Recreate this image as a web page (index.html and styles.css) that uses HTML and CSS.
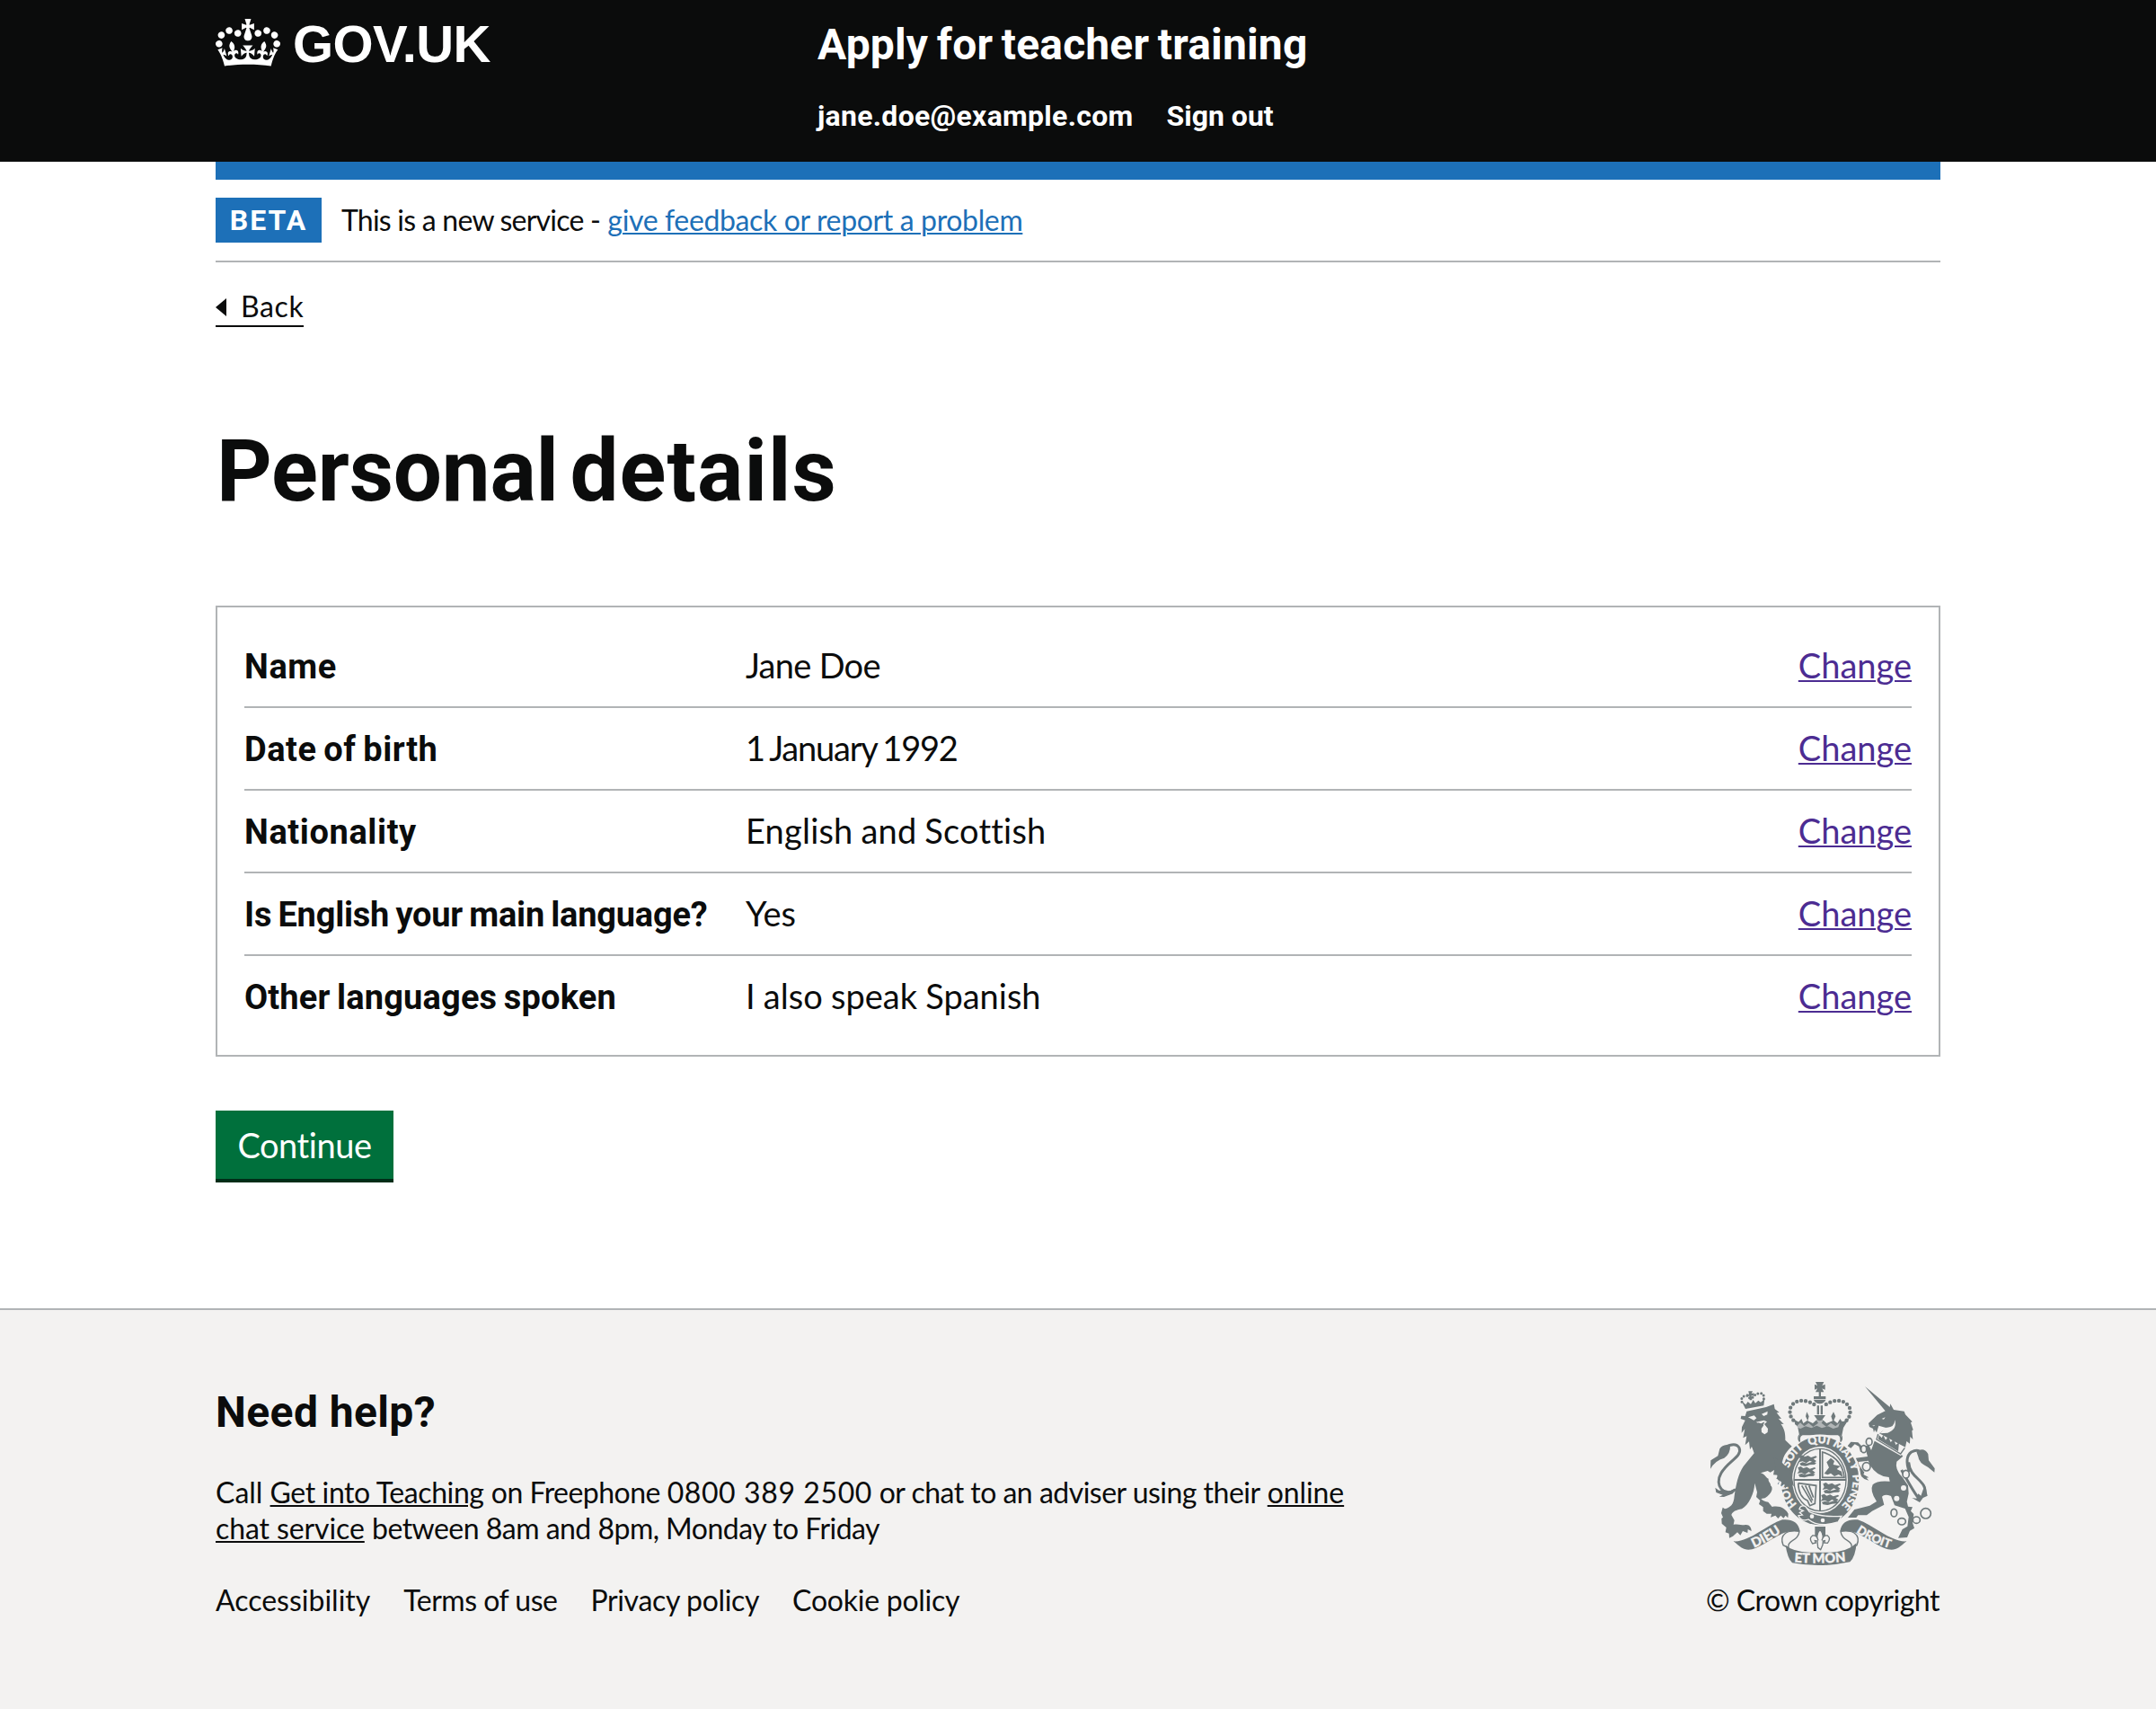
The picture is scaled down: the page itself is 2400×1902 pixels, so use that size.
FILE: index.html
```html
<!DOCTYPE html>
<html lang="en">
<head>
<meta charset="utf-8">
<title>Personal details - Apply for teacher training</title>
<link rel="stylesheet" href="styles.css">
</head>
<body>
<header class="header">
  <div class="container header-inner">
    <a class="logo">
      <svg class="logo-crown" viewBox="0 0 132 97" width="72" height="53" aria-hidden="true"><path fill="currentColor" fill-rule="evenodd" d="M25 30.2c3.5 1.5 7.7-.2 9.1-3.7 1.5-3.6-.2-7.8-3.9-9.2-3.6-1.4-7.6.3-9.1 3.9-1.4 3.5.3 7.5 3.9 9zM9 39.5c3.6 1.5 7.8-.2 9.2-3.7 1.5-3.6-.2-7.8-3.9-9.1-3.6-1.5-7.6.2-9.1 3.8-1.4 3.5.3 7.5 3.8 9zM4.4 57.2c3.5 1.5 7.7-.2 9.1-3.8 1.5-3.6-.2-7.7-3.9-9.1-3.5-1.5-7.6.3-9.1 3.8-1.4 3.5.3 7.6 3.9 9.1zm38.3-21.4c3.5 1.5 7.7-.2 9.1-3.8 1.5-3.6-.2-7.7-3.9-9.1-3.6-1.5-7.6.3-9.1 3.8-1.3 3.6.4 7.7 3.9 9.1zm64.4-5.6c-3.6 1.5-7.8-.2-9.1-3.7-1.5-3.6.2-7.8 3.8-9.2 3.6-1.4 7.7.3 9.2 3.9 1.3 3.5-.4 7.5-3.9 9zm15.9 9.3c-3.6 1.5-7.7-.2-9.1-3.7-1.5-3.6.2-7.8 3.7-9.1 3.6-1.5 7.7.2 9.2 3.8 1.5 3.5-.3 7.5-3.8 9zm4.7 17.7c-3.6 1.5-7.8-.2-9.2-3.8-1.5-3.6.2-7.7 3.9-9.1 3.6-1.5 7.7.3 9.2 3.8 1.3 3.5-.4 7.6-3.9 9.1zM89.3 35.8c-3.6 1.5-7.8-.2-9.2-3.8-1.4-3.6.2-7.7 3.9-9.1 3.6-1.5 7.7.3 9.2 3.8 1.4 3.6-.3 7.7-3.9 9.1zM69.7 17.7l8.9 4.7V9.3l-8.9 2.8c-.2-.3-.5-.6-.9-.9L72.4 0H59.6l3.5 11.2c-.3.3-.6.5-.9.9l-8.8-2.8v13.1l8.8-4.7c.3.3.6.7.9.9l-5 15.4v.1c-.2.8-.4 1.6-.4 2.4 0 4.1 3.1 7.5 7 8.1h.2c.3 0 .7.1 1 .1.4 0 .7 0 1-.1h.2c4-.6 7.1-4.1 7.1-8.1 0-.8-.1-1.7-.4-2.4V34l-5.1-15.4c.4-.2.7-.6 1-.9zM66 92.8c16.9 0 32.8 1.1 47.1 3.2 4-16.9 8.9-26.7 14-33.5l-9.6-3.4c1 4.9 1.1 7.2 0 10.2-1.5-1.4-3-4.3-4.2-8.7L108.6 76c2.8-2 5-3.2 7.5-3.3-4.4 9.4-10 11.9-13.6 11.2-4.3-.8-6.3-4.6-5.6-7.9 1-4.7 5.7-5.9 8-.5 4.3-8.7-3-11.4-7.6-8.8 7.1-7.2 7.9-13.5 2.1-21.1-8 6.1-8.1 12.3-4.5 20.8-4.7-5.4-12.1-2.5-9.5 6.2 3.4-5.2 7.9-2 7.2 3.1-.6 4.3-6.4 7.8-13.5 7.2-10.3-.9-10.9-8-11.2-13.8 2.5-.5 7.1 1.8 11 7.3L80.2 60c-4.1 4.4-8 5.3-12.3 5.4 1.4-4.4 8-11.6 8-11.6H55.5s6.4 7.2 7.9 11.6c-4.2-.1-8-1-12.3-5.4l1.4 16.4c3.9-5.5 8.5-7.7 10.9-7.3-.3 5.8-.9 12.8-11.1 13.8-7.2.6-12.9-2.9-13.5-7.2-.7-5 3.8-8.3 7.1-3.1 2.7-8.7-4.6-11.6-9.4-6.2 3.7-8.5 3.6-14.7-4.6-20.8-5.8 7.6-5 13.9 2.2 21.1-4.7-2.6-11.9.1-7.7 8.8 2.3-5.5 7.1-4.2 8.1.5.7 3.3-1.3 7.1-5.7 7.9-3.5.7-9-1.8-13.5-11.2 2.5.1 4.7 1.3 7.5 3.3l-4.7-15.4c-1.2 4.4-2.7 7.2-4.3 8.7-1.1-3-.9-5.3 0-10.2l-9.5 3.4c5 6.9 9.9 16.7 14 33.5 14.8-2.1 30.8-3.2 47.7-3.2z"/></svg>
      <span class="logo-text">GOV.UK</span>
    </a>
    <div class="header-content">
      <a class="service-name">Apply for teacher training</a>
      <nav class="header-nav"><a class="nav-email">jane.doe@example.com</a><a>Sign out</a></nav>
    </div>
  </div>
</header>

<div class="container">
  <div class="header-bar"></div>
  <div class="phase-banner">
    <strong class="tag">BETA</strong>
    <span class="phase-text"><span class="phase-intro">This is a new service -</span> <a class="link">give feedback or report a problem</a></span>
  </div>
  <a class="back-link"><svg class="back-arrow" width="12" height="20" viewBox="0 0 12 20" aria-hidden="true"><path d="M0 10 12 0V20Z" fill="currentColor"/></svg><span>Back</span></a>

  <main>
    <h1 class="title">Personal <span class="title-wide">details</span></h1>
    <dl class="summary">
      <div class="row"><dt class="key k-wide">Name</dt><dd class="value v-name">Jane Doe</dd><dd><a class="change">Change</a></dd></div>
      <div class="row"><dt class="key k-mid">Date of birth</dt><dd class="value v-date">1 January 1992</dd><dd><a class="change">Change</a></dd></div>
      <div class="row"><dt class="key k-wide">Nationality</dt><dd class="value v-nation">English and Scottish</dd><dd><a class="change">Change</a></dd></div>
      <div class="row"><dt class="key k-tight">Is English your main language?</dt><dd class="value">Yes</dd><dd><a class="change">Change</a></dd></div>
      <div class="row"><dt class="key k-other">Other languages spoken</dt><dd class="value v-also">I also speak Spanish</dd><dd><a class="change">Change</a></dd></div>
    </dl>
    <button class="button">Continue</button>
  </main>
</div>

<footer class="footer">
  <div class="container footer-inner">
    <div class="footer-help">
      <h2 class="help-title">Need help?</h2>
      <p class="help-text">Call <a class="t-git">Get into Teaching</a> <span class="t-free">on Freephone <span class="t-num">0800 389 2500</span> or chat to an adviser using their</span> <a class="t-chat">online<br>chat service</a> <span class="t-hours">between 8am and 8pm, Monday to Friday</span></p>
      <ul class="footer-links"><li>Accessibility</li><li class="t-terms">Terms of use</li><li class="t-privacy">Privacy policy</li><li class="t-cookie">Cookie policy</li></ul>
    </div>
    <div class="copyright">
      <svg class="arms" viewBox="60 78 780 624" width="260" height="208" aria-hidden="true">
        <defs>
          <path id="motto" d="M438 525A112 114 0 0 1 328 413A110 124 0 0 1 438 289A110 124 0 0 1 548 413A112 114 0 0 1 438 525"/>
          <path id="dieu" d="M210 641Q255 624 322 577"/>
          <path id="droit" d="M546 577Q610 624 690 645"/>
          <path id="etmon" d="M340 684Q438 694 536 682"/>
          <g id="charge"><path d="M2 4 12 0l8 6 12-4 10 6 16-5 4 4-12 6 10 7-8 6-14-7-12 8-12-6-14 3 6-9ZM4 28l10-4 14 4 16-5 16 3-6 6-16 1-14 4-16-2Z"/></g>
        </defs>

        <!-- lion -->
        <g transform="translate(60 60)">
          <path d="M133 122 198 108 224 98 227 114 242 126 233 127 249 147 239 146 257 165 247 164C258 178 263 194 262 218L284 239C262 258 255 276 253 288L268 306 284 336 291 370 285 362 281 381 275 366 264 381 262 366 249 376 251 362 236 366 243 352 232 347 238 335 222 334 225 318 212 326 203 321 180 328C198 334 196 345 206 347 204 358 214 360 213 370 222 376 220 396 194 412L181 414Q190 424 205 425L218 441C245 436 262 447 272 464L271 478 263 470 256 479 247 470 238 480 229 470 213 476 216 464 200 464 188 455 188 442 174 432 178 420 165 408 168 392 160 362C158 398 140 434 117 448 98 452 86 456 82 468L92 486 89 500C110 497 119 504 128 501 142 499 149 510 149 522L137 516 136 528 120 522 112 536 102 526 87 539 75 545 74 530 62 526 65 510 50 497 49 480 54 476 48 462 53 443 60 448C78 442 90 435 92 404 99 360 104 335 122 306L158 262 150 240 144 250 141 223 128 235 133 205 121 211 127 181 116 194 117 175 128 152 113 147 115 137 128 138Z"/>
          <path d="M116 88 129 114 190 103 193 80 180 92 172 86 162 95 155 84 147 98 137 90 130 100ZM139 55h14l-4 8 8-2v10l-8-2 2 16h-8l-1-15-9 4v-10l8 2Z"/>
          <path d="M117 91Q113 76 125 71T143 78M153 76Q163 62 178 62T190 82" fill="none" stroke="currentColor" stroke-width="9" stroke-linecap="round" stroke-dasharray="0 11"/>
          <path d="M96 383C58 410 23 371 48 328 69 289 121 272 108 244 99 228 80 232 60 242" fill="none" stroke="currentColor" stroke-width="9"/>
          <path d="M78 237Q55 230 43 247L37 271 13 286 12 314Q28 286 58 278 79 264 78 237ZM28 377 40 386 75 389 100 378 87 397 57 408 41 407 53 401 31 393Z"/>
          <g class="arms-paper"><path d="m138 142 20-6 8 9-9 7ZM183 131l20-9-1 11-12 5ZM164 158l27-6 10 5-9 8 12 15-1 12-10 7-10-7-1-12 8-11Z"/></g>
          <path d="m171 159 10 4 12-6-5 12-13-1Z"/>
        </g>

        <!-- unicorn -->
        <g transform="translate(510 60)">
          <path d="M78 39 161 108 163 97 174 117 209 122 213 133 236 157 231 160 239 184 235 187 238 216 229 207 228 230 217 222 213 242 126 196 151 178 124 170 117 193 111 184 108 193 105 180 93 174 90 162 119 134 146 121ZM113 213 195 260 205 272 184 290Q177 316 203 342L222 370 224 397 218 424 222 440 237 442 231 455 241 465 237 494 243 512 228 521 219 543 189 545 203 516 220 506 224 475 212 447 177 436 165 405Q143 396 135 407L142 434 102 455 84 469 55 469 49 477H21L43 450 94 437 117 423Q93 388 104 367 118 352 161 356L158 342Q118 340 96 303L89 287 56 291 58 301 76 326 73 333 91 343 83 344 91 353 76 348 65 338 51 323 37 302 35 290 48 278 87 273 81 252 63 258 58 239 44 232 31 245 20 238 31 224 55 226 69 240 91 235 99 252Z"/>
          <path class="arms-paper" d="M149 176Q176 178 178 151 186 183 154 194L128 196ZM134 147l12-5-5 7ZM102 170l10-2-4 4Z"/>
          <path class="arms-paper" d="m120 197 94 47-16 27-90-51Z"/>
          <path d="m122 198-5 18 80 48 14-20" fill="none" stroke="currentColor" stroke-width="4"/>
          <path d="m122 215 3-14 9 10 5-10 8 17 9-12 8 19 10-10 7 19 11-8-3 30Z"/>
          <path d="M200 318Q240 390 254 408M226 324Q209 276 233 258 260 243 267 269M224 292C228 350 288 350 278 400" fill="none" stroke="currentColor" stroke-width="9"/>
          <path d="M250 257Q275 240 289 265L291 286 311 313 310 326 289 309Q257 294 256 274ZM278 367 287 404 272 411 261 426 235 411 250 413 256 397 265 404Z"/>
          <g fill="none" stroke="currentColor" stroke-width="5"><g class="arms-fill"><ellipse cx="92" cy="224" rx="10" ry="12"/><ellipse cx="74" cy="248" rx="9" ry="12"/><ellipse cx="83" cy="307" rx="13" ry="14"/><ellipse cx="215" cy="332" rx="11" ry="13"/></g><ellipse cx="175" cy="461" rx="10" ry="13"/><ellipse cx="201" cy="490" rx="13" ry="11"/><ellipse cx="250" cy="485" rx="12" ry="11"/><circle cx="281" cy="463" r="17"/></g>
          <g class="arms-paper"><circle cx="207" cy="378" r="9"/><circle cx="184" cy="413" r="9"/></g>
        </g>

        <!-- royal crown -->
        <path d="M423 84h28l-6 12 10-4v18l-10-4 6 12h-28l6-12-9 4v-18l9 4ZM434 117h7v15h16v10h-40v-10h17ZM417 144h40q-5 12-20 13-15-1-20-13ZM428 163h7v30h-7ZM440 163h7v30h-7Z"/>
        <path d="M360 222Q330 200 340 168 358 138 400 150L420 160M515 222Q547 200 536 168 516 138 476 150L456 160" fill="none" stroke="currentColor" stroke-width="13" stroke-linecap="round" stroke-dasharray="0 15"/>
        <path d="M345 205 366 218 376 207 382 222 396 212 390 199 394 184 401 199 397 214 414 222 428 209 418 195h38l-10 14 14 13 20-8-5-15 8-15 7 15-6 13 12 10 9-15 8 11 23-13-20 32-5 25H369l-5-25Z"/>
        <path class="arms-paper" d="m372 220 13 12 15-11 15 13 17-13-8-12 13 5 14-5-8 12 16 13 15-13 16 11 14-12-5 15-17 5-17-8-21 6-17-8-18 8-19-6-17 8-16-5Z" opacity=".5"/>
        <rect x="366" y="257" width="145" height="29" rx="13" fill="none" stroke="currentColor" stroke-width="4"/>

        <!-- garter and shield -->
        <ellipse cx="438" cy="414" rx="137" ry="155" class="arms-paper"/>
        <ellipse cx="438" cy="414" rx="130" ry="148"/>
        <path d="M370 284Q365 258 389 256H490Q511 258 507 284" fill="none" stroke="currentColor" stroke-width="5"/>
        <ellipse cx="438" cy="411" rx="93" ry="111" class="arms-paper"/>
        <ellipse cx="438" cy="411" rx="87" ry="104" fill="none" stroke="currentColor" stroke-width="4"/>
        <path d="M438 307V515M351 411H525" fill="none" stroke="currentColor" stroke-width="6"/>
        <use href="#charge" x="366" y="328"/><use href="#charge" x="362" y="366"/>
        <use href="#charge" x="446" y="420"/><use href="#charge" x="440" y="458"/>
        <path d="M446 318Q512 338 519 403H446Z" fill="none" stroke="currentColor" stroke-width="5"/>
        <path d="m452 390 16-20-8-18 14-14 12 10-4 12 24 5-12 10 16 8 4 18-14-8-14 6-12-10-10 5Z"/>
        <path d="M365 422 425 430 421 490 404 497 396 480Q367 468 365 422M377 430l34 57M389 430l24 50M401 430l15 40" fill="none" stroke="currentColor" stroke-width="5"/>
        <g class="arms-lettering" font-size="37">
          <text><textPath href="#motto" startOffset="18%">HON</textPath></text>
          <text><textPath href="#motto" startOffset="36%">SOIT</textPath></text>
          <text><textPath href="#motto" startOffset="49.5%">QUI</textPath></text>
          <text><textPath href="#motto" startOffset="61.5%">MAL</textPath></text>
          <text><textPath href="#motto" startOffset="69.5%">Y</textPath></text>
          <text><textPath href="#motto" startOffset="81%">PENSE</textPath></text>
        </g>
        <path d="M369 509Q371 494 389 499L403 518Q442 537 510 532L498 552Q434 572 399 543 375 552 366 530L379 528 370 520 382 514Z" stroke="#f3f2f1" stroke-width="4"/>
        <g class="arms-paper"><circle cx="411" cy="533" r="7"/><circle cx="447" cy="546" r="7"/></g>
        <!-- lion's forepaw over the garter -->
        <path d="M284 337 303 345 330 372 344 399 351 433 343 425 338 441 331 426 321 440 319 425 306 432 310 418 298 412Z"/>

        <!-- fleur-de-lis and scrolls -->
        <path d="M421 567h35v44h-35Z"/>
        <path class="arms-fill" d="M438 577Q454 595 444 613 450 594 463 597 476 606 463 622L452 621 454 614 448 615 447 628 440 644 431 637 429 615 421 614 424 621 413 624Q399 606 413 597 427 594 432 613 422 595 438 577Z" stroke="currentColor" stroke-width="4"/>
        <g id="scroll">
          <path d="M149 616C199 621 261 561 312 544 344 541 366 552 371 582L341 584C315 578 251 632 211 643 184 648 174 637 149 616Z"/>
          <path d="M369 583Q366 603 347 613 329 623 333 638L315 629Q304 603 323 589 337 579 369 583Z" class="arms-fill" stroke="currentColor" stroke-width="4"/>
        </g>
        <use href="#scroll" transform="matrix(-1 0 0 1 876 0)"/>
        <path d="M323 629Q348 651 403 653H473Q530 651 560 622 556 669 538 685 437 706 345 688 329 672 323 629Z"/>
        <g class="arms-lettering" font-size="44">
          <text><textPath href="#dieu" startOffset="47%">DIEU</textPath></text>
          <text><textPath href="#etmon" startOffset="50%">ET MON</textPath></text>
          <text font-size="40"><textPath href="#droit" startOffset="48%">DROIT</textPath></text>
        </g>
      </svg>
      <span class="t-copy">© Crown copyright</span>
    </div>
  </div>
</footer>
</body>
</html>
```
FILE: styles.css
```css
* { box-sizing: border-box; }

body {
  margin: 0;
  min-height: 1902px;
  display: flex;
  flex-direction: column;
  background: #fff;
  color: #0b0c0c;
  font-family: Lato, "Open Sans", sans-serif;
  font-size: 32px;
  line-height: 40px;
}

h1, h2, p, dl, dd, ul { margin: 0; padding: 0; }
.container { width: 1920px; margin: 0 auto; }

/* Header */
.header { height: 180px; background: #0b0c0c; color: #fff; }
.header-inner { display: flex; }
.logo { display: flex; width: 670px; padding-top: 21px; }
.logo-crown { flex: none; }
.logo-text {
  margin: -2px 0 0 14px;
  font: bold 58px/60px "Liberation Sans", Arial, sans-serif;
  letter-spacing: -0.6px;
}
.header-content { padding-top: 20px; font-family: Roboto, sans-serif; font-weight: 700; }
.service-name { display: block; font-size: 48px; line-height: 60px; letter-spacing: 0.17px; word-spacing: -2.5px; }
.header-nav { display: flex; gap: 37px; margin-top: 29px; }
.nav-email { letter-spacing: 0.28px; }
.header-bar { height: 20px; background: #1d70b8; }

/* Phase banner */
.phase-banner { display: flex; gap: 22px; height: 92px; padding-top: 20px; border-bottom: 2px solid #b1b4b6; }
.tag {
  width: 118px;
  height: 50px;
  background: #1d70b8;
  color: #fff;
  font: bold 32px/50px Roboto, sans-serif;
  letter-spacing: 2px;
  text-align: center;
}
.phase-text { padding-top: 5px; white-space: nowrap; }
.phase-intro { letter-spacing: -0.77px; }
.link { color: #1d70b8; letter-spacing: -0.36px; text-decoration: underline; text-decoration-thickness: 2px; text-underline-offset: 2px; }

.back-link {
  display: flex;
  align-items: center;
  gap: 16px;
  width: 98px;
  height: 44px;
  margin-top: 28px;
  border-bottom: 2px solid #0b0c0c;
  letter-spacing: 0.6px;
}
.back-arrow { flex: none; margin-top: 2px; }

/* Main */
.title { margin: 110px 0 100px 1px; font: bold 96px/100px Roboto, sans-serif; letter-spacing: -0.2px; word-spacing: -11px; }
.title-wide { letter-spacing: 1.1px; }
.summary { height: 502px; padding: 20px 30px; border: 2px solid #b1b4b6; }
.row {
  display: grid;
  grid-template-columns: 558px 1fr auto;
  height: 92px;
  padding-top: 20px;
  border-bottom: 2px solid #b1b4b6;
  font-size: 38px;
  line-height: 48px;
}
.row:last-child { border-bottom: 0; }
.key { font-family: Roboto, sans-serif; font-weight: 700; line-height: 52px; word-spacing: -2px; }
.k-wide { letter-spacing: 0.6px; }
.k-mid { letter-spacing: 0.5px; }
.k-tight { letter-spacing: -0.22px; white-space: nowrap; }
.k-other { letter-spacing: 0.15px; }
.v-name { letter-spacing: -0.7px; }
.v-date { letter-spacing: -1.2px; word-spacing: -2px; }
.v-nation { letter-spacing: 0.2px; word-spacing: -1px; }
.v-also { word-spacing: -0.5px; }
.change { color: #4c2c92; text-decoration: underline; text-decoration-thickness: 2px; text-underline-offset: 2px; }

.button {
  display: block;
  width: 198px;
  height: 80px;
  margin: 60px 0 140px;
  padding: 0;
  border: 0;
  border-bottom: 4px solid #002d18;
  background: #00703c;
  color: #fff;
  font: 38px/76px Lato, sans-serif;
  letter-spacing: -0.45px;
}

/* Footer */
.footer { flex: 1; border-top: 2px solid #b1b4b6; background: #f3f2f1; }
.footer-inner { display: flex; justify-content: space-between; align-items: flex-end; padding-top: 79px; }
.footer-help { white-space: nowrap; }
.help-title { margin: 0 0 39px; font: bold 48px/60px Roboto, sans-serif; letter-spacing: 0.4px; }
.help-text { margin-bottom: 40px; }
.help-text a { text-decoration: underline; text-decoration-thickness: 2px; text-underline-offset: 2px; }
.help-text .t-git { letter-spacing: -0.4px; }
.t-free { letter-spacing: -0.52px; }
.t-num { letter-spacing: 0.6px; }
.t-chat { letter-spacing: -0.1px; }
.t-hours { letter-spacing: -0.52px; }
.footer-links { display: flex; gap: 37px; list-style: none; }
.t-terms { letter-spacing: -0.5px; }
.t-privacy { letter-spacing: -0.35px; }
.t-cookie { letter-spacing: -0.25px; }
.copyright { display: flex; flex-direction: column; width: 260px; }
.t-copy { margin: 17px 0 0 -1px; letter-spacing: -0.5px; white-space: nowrap; }

.arms { margin-top: -1px; color: #6f797b; fill: currentColor; }
.arms-paper, .arms-fill, .arms-fill ellipse { fill: #f3f2f1; }
.arms-lettering {
  fill: #f3f2f1;
  stroke: #f3f2f1;
  stroke-width: 1;
  font-family: Lato, sans-serif;
  font-weight: 900;
  text-anchor: middle;
}
```
